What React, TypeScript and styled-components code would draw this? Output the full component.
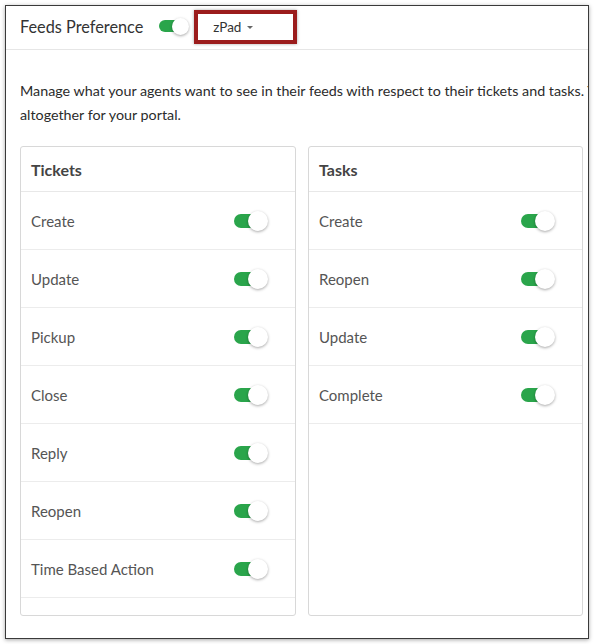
import styled, { createGlobalStyle } from 'styled-components'

const GlobalStyle = createGlobalStyle`
    body {
        margin: 0;
        background: #fff;
        font-family: Lato, 'Open Sans', sans-serif;
    }
`

const ticketEvents = ['Create', 'Update', 'Pickup', 'Close', 'Reply', 'Reopen', 'Time Based Action']
const taskEvents = ['Create', 'Reopen', 'Update', 'Complete']

type ToggleProps = { small?: boolean }

const Toggle = ({ small = false }: ToggleProps) => (
    <ToggleRoot $small={small}>
        <Track $small={small} />
        <Knob $small={small} />
    </ToggleRoot>
)

const FeedCard = ({ title, items }: { title: string; items: string[] }) => (
    <Card>
        <CardHeader>{title}</CardHeader>
        {items.map((item) => (
            <Row key={item}>
                <RowLabel>{item}</RowLabel>
                <Toggle />
            </Row>
        ))}
    </Card>
)

export default function App() {
    return (
        <>
            <GlobalStyle />
            <Frame>
                <Header>
                    <Title>Feeds Preference</Title>
                    <Toggle small />
                    <PortalSelect>
                        zPad
                        <Caret />
                    </PortalSelect>
                </Header>

                <Description>
                    Manage what your agents want to see in their feeds with respect to their tickets and tasks. You can also enable or disable feeds
                    <br />
                    altogether for your portal.
                </Description>

                <Cards>
                    <FeedCard title="Tickets" items={ticketEvents} />
                    <FeedCard title="Tasks" items={taskEvents} />
                </Cards>
            </Frame>
        </>
    )
}

const Frame = styled.div`
    box-sizing: border-box;
    margin: 5px;
    width: 584px;
    height: 634px;
    border: 1px solid #3a3a3a;
    box-shadow: 0 1px 4px rgba(0, 0, 0, 0.35);
    overflow: hidden;
    background: #fff;
`

const Header = styled.div`
    display: flex;
    align-items: center;
    height: 40px;
    padding: 0 0 3px 14px;
    border-bottom: 1px solid #e6e6e6;
`

const Title = styled.span`
    font-size: 16.3px;
    color: #333;
    margin-right: 16px;
`

const PortalSelect = styled.div`
    box-sizing: border-box;
    display: flex;
    align-items: center;
    gap: 6px;
    margin: 1px 0 0 5px;
    width: 103px;
    height: 34px;
    padding-left: 15px;
    border: 4px solid #9b1c1c;
    box-shadow: 0 0 3px rgba(0, 0, 0, 0.35);
    font-size: 13.5px;
    color: #333;
`

const Caret = styled.span`
    width: 0;
    height: 0;
    margin-top: 1px;
    border-left: 3px solid transparent;
    border-right: 3px solid transparent;
    border-top: 3px solid #666;
`

const Description = styled.p`
    margin: 0;
    padding: 29px 0 0 14px;
    font-size: 14.3px;
    line-height: 24px;
    color: #2b2b2b;
    white-space: nowrap;
`

const Cards = styled.div`
    display: grid;
    grid-template-columns: 276px 275px;
    gap: 12px;
    padding: 19px 0 0 14px;
`

const Card = styled.div`
    box-sizing: border-box;
    height: 470px;
    border: 1px solid #d8d8d8;
    border-radius: 3px;
    overflow: hidden;
`

const CardHeader = styled.div`
    display: flex;
    align-items: center;
    height: 44px;
    padding-left: 10px;
    border-bottom: 1px solid #e8e8e8;
    font-size: 16px;
    font-weight: 700;
    color: #444;
`

const Row = styled.div`
    display: flex;
    align-items: center;
    justify-content: space-between;
    height: 57px;
    padding: 0 27px 0 10px;
    border-bottom: 1px solid #ececec;
`

const RowLabel = styled.span`
    font-size: 15px;
    color: #555;
`

const ToggleRoot = styled.span<{ $small: boolean }>`
    position: relative;
    display: inline-block;
    width: ${({ $small }) => ($small ? 30 : 34)}px;
    height: ${({ $small }) => ($small ? 17 : 20)}px;
`

const Track = styled.span<{ $small: boolean }>`
    position: absolute;
    left: 0;
    top: 50%;
    transform: translateY(-50%);
    width: ${({ $small }) => ($small ? 22 : 25)}px;
    height: ${({ $small }) => ($small ? 12 : 14)}px;
    border-radius: 8px;
    background: #2aa54b;
`

const Knob = styled.span<{ $small: boolean }>`
    position: absolute;
    right: 0;
    top: 0;
    width: ${({ $small }) => ($small ? 17 : 20)}px;
    height: ${({ $small }) => ($small ? 17 : 20)}px;
    border-radius: 50%;
    background: #fff;
    box-shadow: 0 1px 3px rgba(0, 0, 0, 0.35);
`
